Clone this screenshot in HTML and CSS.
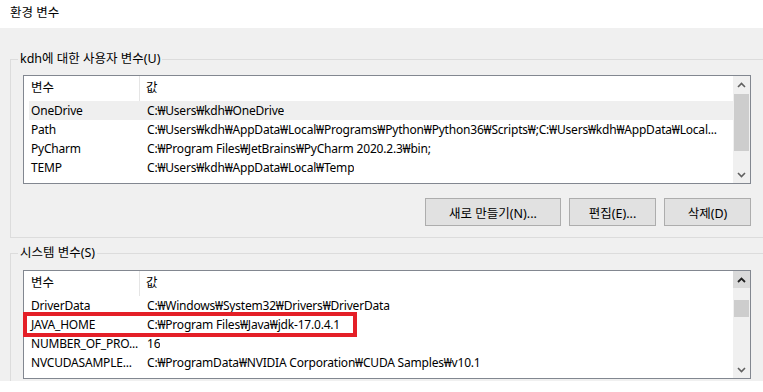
FILE: index.html
```html
<!DOCTYPE html>
<html lang="ko">
<head>
    <meta charset="UTF-8">
    <title>환경 변수</title>
    <link rel="stylesheet" href="styles.css">
</head>
<body>
    <div class="title-bar">환경 변수</div>
    <div class="panel">
        <div class="group user-group">
            <div class="group-label">kdh에 대한 사용자 변수(U)</div>
            <div class="list-box">
                <div class="list-body">
                    <div class="list-header">
                        <div class="col-name">변수</div>
                        <div class="col-value">값</div>
                    </div>
                    <div class="list-row selected">
                        <div class="col-name">OneDrive</div>
                        <div class="col-value">C:₩Users₩kdh₩OneDrive</div>
                    </div>
                    <div class="list-row">
                        <div class="col-name">Path</div>
                        <div class="col-value">C:₩Users₩kdh₩AppData₩Local₩Programs₩Python₩Python36₩Scripts₩;C:₩Users₩kdh₩AppData₩Local...</div>
                    </div>
                    <div class="list-row">
                        <div class="col-name">PyCharm</div>
                        <div class="col-value">C:₩Program Files₩JetBrains₩PyCharm 2020.2.3₩bin;</div>
                    </div>
                    <div class="list-row">
                        <div class="col-name">TEMP</div>
                        <div class="col-value">C:₩Users₩kdh₩AppData₩Local₩Temp</div>
                    </div>
                </div>
                <div class="scrollbar">
                    <div class="scroll-btn">
                        <svg width="9" height="6" viewBox="0 0 9 6"><polyline points="1,5 4.5,1.5 8,5" fill="none" stroke="#606060" stroke-width="1.6"/></svg>
                    </div>
                    <div class="scroll-track">
                        <div class="scroll-thumb user-thumb"></div>
                    </div>
                    <div class="scroll-btn">
                        <svg width="9" height="6" viewBox="0 0 9 6"><polyline points="1,1 4.5,4.5 8,1" fill="none" stroke="#606060" stroke-width="1.6"/></svg>
                    </div>
                </div>
            </div>
            <div class="button-row">
                <button class="btn btn-wide">새로 만들기(N)...</button>
                <button class="btn">편집(E)...</button>
                <button class="btn">삭제(D)</button>
            </div>
        </div>

        <div class="group system-group">
            <div class="group-label">시스템 변수(S)</div>
            <div class="list-box">
                <div class="list-body">
                    <div class="list-header">
                        <div class="col-name">변수</div>
                        <div class="col-value">값</div>
                    </div>
                    <div class="list-row">
                        <div class="col-name">DriverData</div>
                        <div class="col-value">C:₩Windows₩System32₩Drivers₩DriverData</div>
                    </div>
                    <div class="list-row">
                        <div class="col-name">JAVA_HOME</div>
                        <div class="col-value">C:₩Program Files₩Java₩jdk-17.0.4.1</div>
                    </div>
                    <div class="list-row">
                        <div class="col-name">NUMBER_OF_PRO...</div>
                        <div class="col-value">16</div>
                    </div>
                    <div class="list-row">
                        <div class="col-name">NVCUDASAMPLE...</div>
                        <div class="col-value">C:₩ProgramData₩NVIDIA Corporation₩CUDA Samples₩v10.1</div>
                    </div>
                </div>
                <div class="scrollbar">
                    <div class="scroll-btn active">
                        <svg width="9" height="6" viewBox="0 0 9 6"><polyline points="1,5 4.5,1.5 8,5" fill="none" stroke="#202020" stroke-width="1.8"/></svg>
                    </div>
                    <div class="scroll-track">
                        <div class="scroll-thumb system-thumb"></div>
                    </div>
                    <div class="scroll-btn">
                        <svg width="9" height="6" viewBox="0 0 9 6"><polyline points="1,1 4.5,4.5 8,1" fill="none" stroke="#606060" stroke-width="1.6"/></svg>
                    </div>
                </div>
            </div>
        </div>
    </div>

    <div class="highlight-box"></div>
</body>
</html>
```

FILE: styles.css
```css
* {
    box-sizing: border-box;
}
body {
    margin: 0;
    background: #ffffff;
    font-family: 'Noto Sans', 'Noto Sans CJK KR', sans-serif;
    font-size: 12px;
    color: #000;
    position: relative;
}
.title-bar {
    height: 28px;
    padding-left: 10px;
    line-height: 26px;
    font-size: 12.5px;
    background: #ffffff;
}
.panel {
    height: 353px;
    background: #f0f0f0;
    overflow: hidden;
    padding-top: 31px;
}
.group {
    position: relative;
    margin-left: 10px;
    margin-right: -20px;
    border: 1px solid #dcdcdc;
    padding-left: 12px;
}
.user-group {
    padding-top: 15px;
    padding-bottom: 11px;
}
.system-group {
    margin-top: 15px;
    padding-top: 16px;
    height: 200px;
}
.group-label {
    position: absolute;
    top: -10px;
    left: 7px;
    padding: 0 2px;
    line-height: 18px;
    font-size: 12.5px;
    background: #f0f0f0;
}
.list-box {
    width: 728px;
    height: 109px;
    border: 1px solid #828790;
    background: #ffffff;
    display: flex;
}
.list-body {
    flex: 1;
    overflow: hidden;
}
.list-header {
    display: flex;
    height: 25px;
    line-height: 24px;
    font-size: 12.5px;
}
.list-header .col-name {
    border-right: 1px solid #e5e5e5;
    width: 116px;
    padding-left: 7px;
}
.list-header .col-value {
    padding-left: 6px;
}
.list-row {
    display: flex;
    height: 19px;
    line-height: 19px;
    margin-left: 5px;
    white-space: nowrap;
    letter-spacing: -0.2px;
}
.list-row.selected {
    background: #efefef;
}
.list-row .col-name {
    width: 111px;
    flex: none;
    padding-left: 2px;
    overflow: hidden;
}
.list-row .col-value {
    padding-left: 7px;
    overflow: hidden;
}
.scrollbar {
    width: 17px;
    background: #f0f0f0;
    display: flex;
    flex-direction: column;
}
.scroll-btn {
    height: 17px;
    display: flex;
    align-items: center;
    justify-content: center;
}
.scroll-btn.active {
    background: #dadada;
}
.scroll-track {
    flex: 1;
    position: relative;
}
.scroll-thumb {
    position: absolute;
    left: 1px;
    right: 1px;
    background: #cdcdcd;
}
.user-thumb {
    top: 1px;
    height: 57px;
}
.system-thumb {
    top: 12px;
    height: 17px;
}
.button-row {
    display: flex;
    justify-content: flex-end;
    gap: 8px;
    width: 728px;
    margin-top: 14px;
}
.btn {
    width: 87px;
    height: 28px;
    border: 1px solid #adadad;
    background: #e1e1e1;
    font-family: inherit;
    font-size: 12.5px;
    color: #000;
    padding: 0;
}
.btn-wide {
    width: 136px;
}
.highlight-box {
    position: absolute;
    left: 23px;
    top: 312px;
    width: 334px;
    height: 25px;
    border: 4px solid #e41f27;
}
```
